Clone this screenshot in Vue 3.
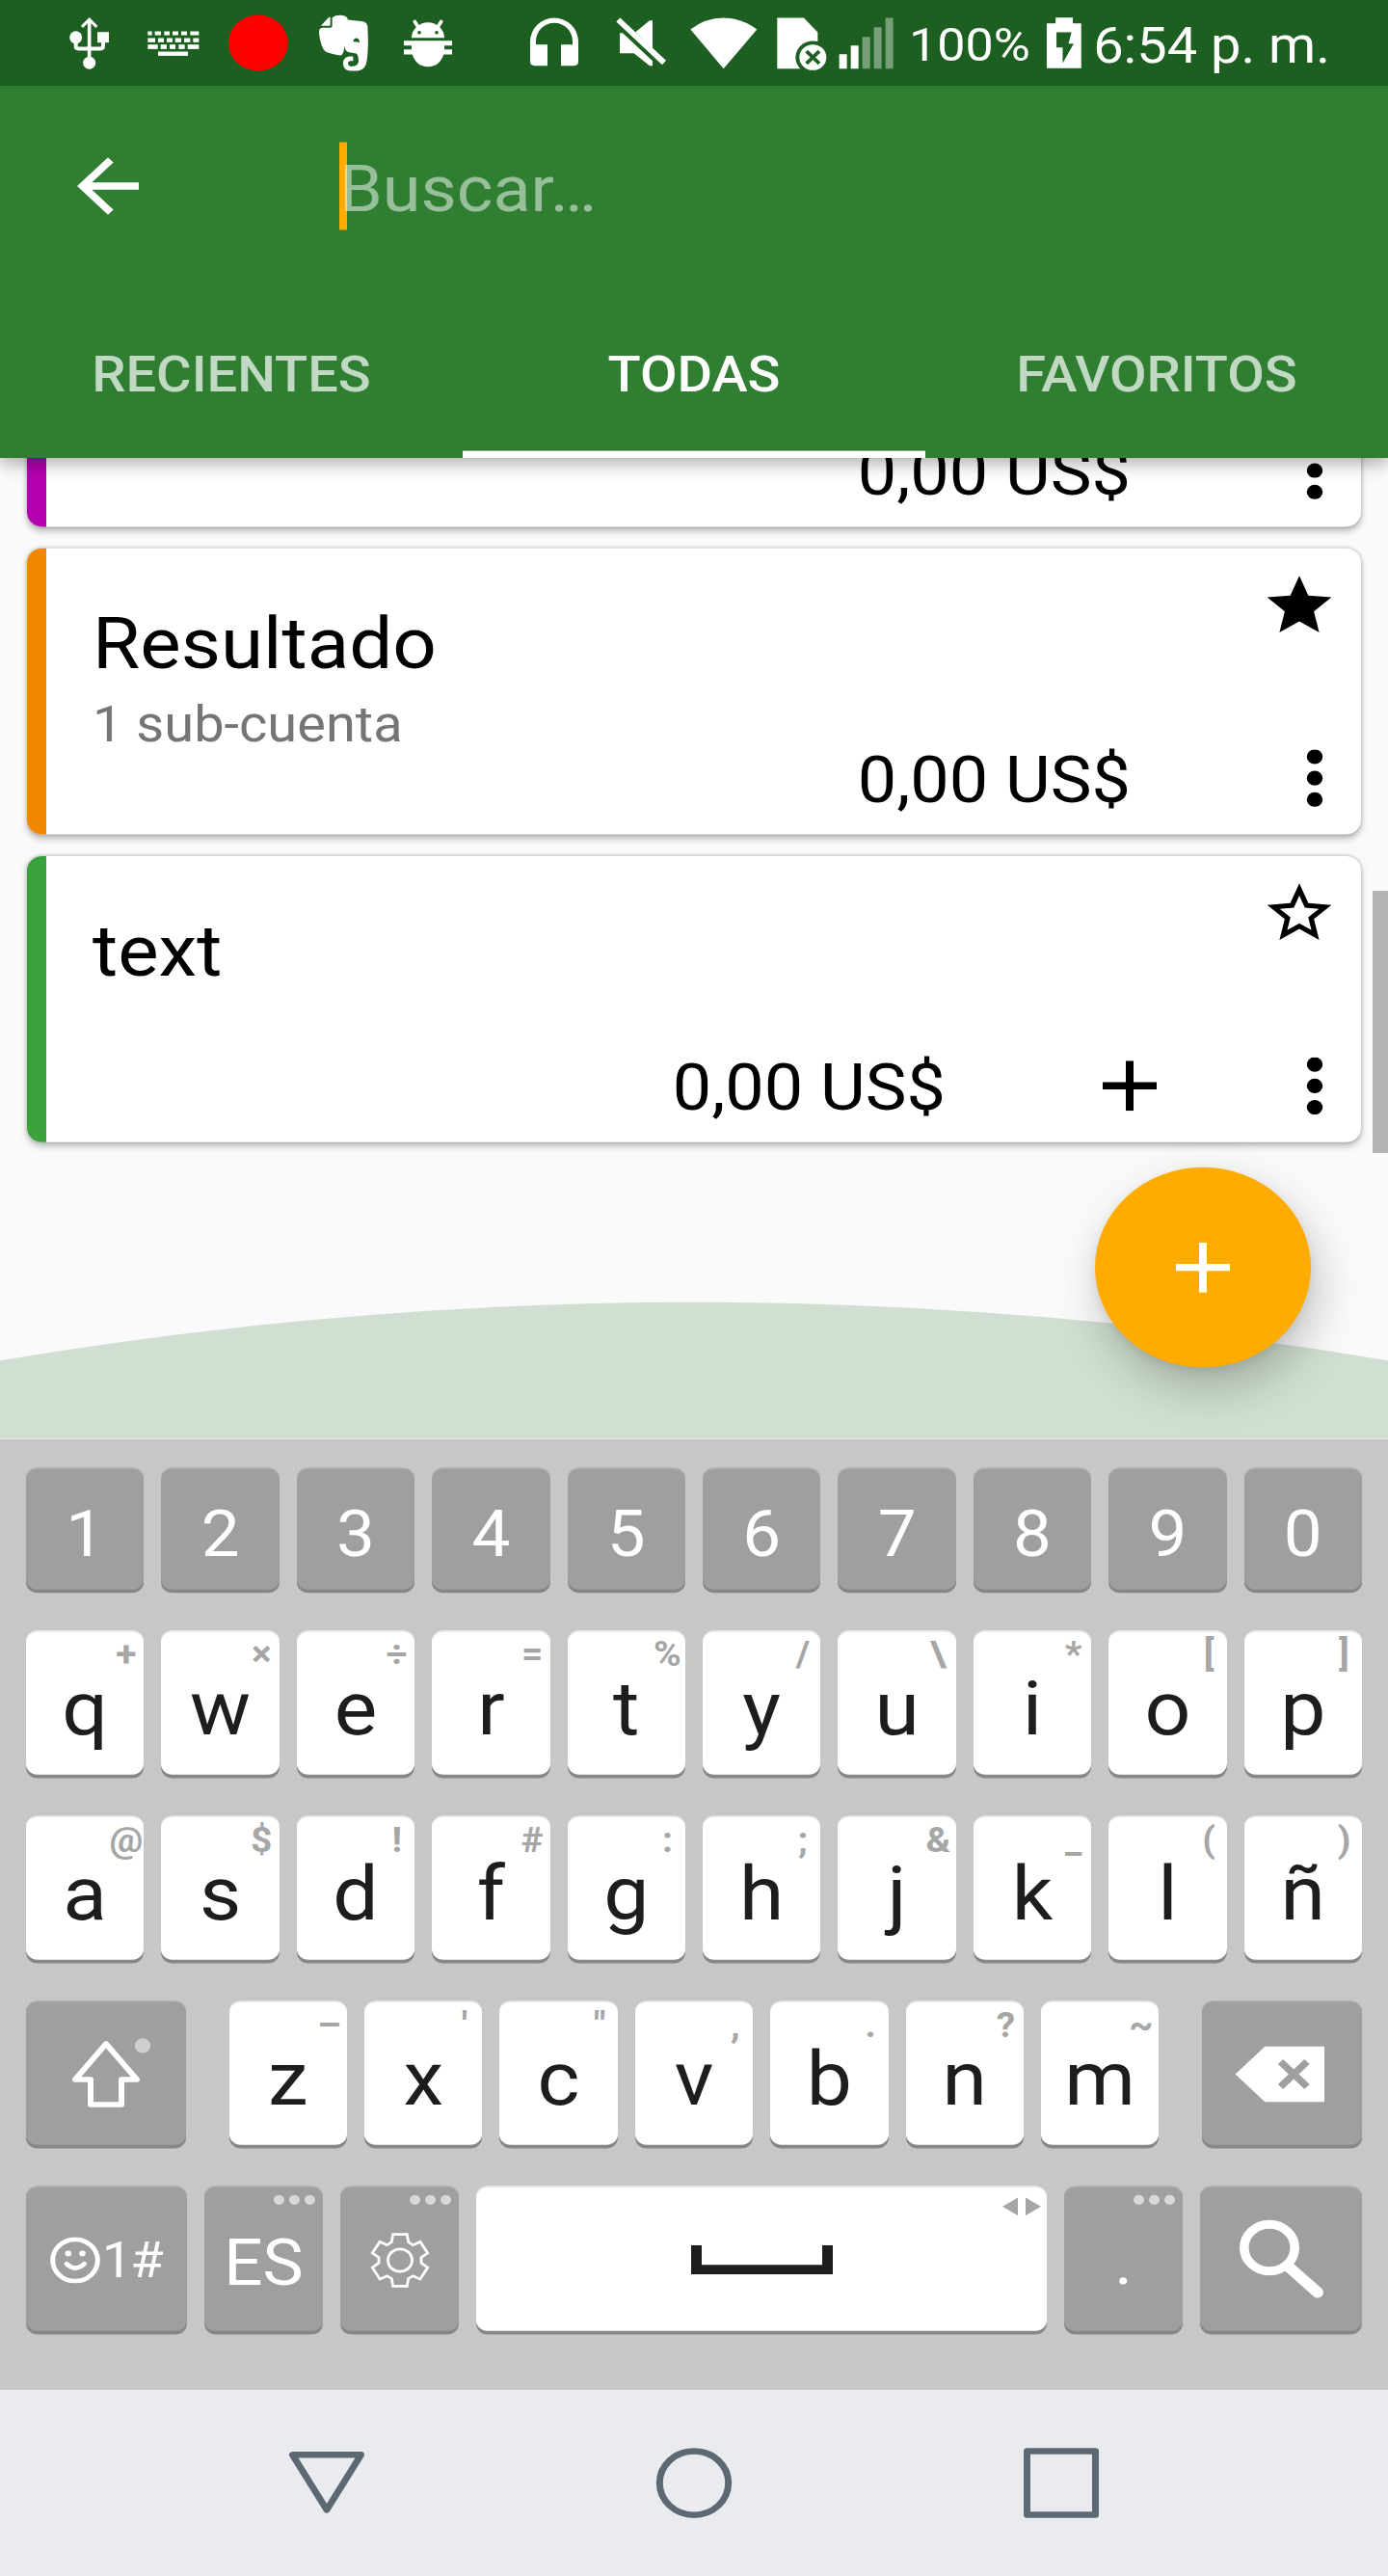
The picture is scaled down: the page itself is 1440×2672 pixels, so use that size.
<script setup>
const tabs = [
  { label: 'Recientes', active: false },
  { label: 'Todas', active: true },
  { label: 'Favoritos', active: false },
]

const accounts = [
  { id: 1, tone: 'purple', name: '', sub: '', amount: '0,00 US$', star: 'none', add: false },
  { id: 2, tone: 'orange', name: 'Resultado', sub: '1 sub-cuenta', amount: '0,00 US$', star: 'full', add: false },
  { id: 3, tone: 'green', name: 'text', sub: '', amount: '0,00 US$', star: 'outline', add: true },
]

const digits = '1234567890'.split('')
const pair = (letters, hints) => letters.split('').map((c, i) => ({ c, hint: hints[i] }))
const letterRows = [pair('qwertyuiop', '+×÷=%/\\*[]'), pair('asdfghjklñ', '@$!#:;&_()')]
const bottomLetters = pair('zxcvbnm', '–\'",.?~')

const keyboardGlyph = [
  [67, 12, [[281, 13], [303, 19], [332, 17], [358, 18], [385, 18], [413, 27]]],
  [88, 13, [[281, 23], [313, 18], [340, 18], [366, 19], [394, 19], [422, 18]]],
  [108, 14, [[281, 31], [321, 19], [349, 18], [377, 19], [405, 35]]],
  [130, 13, [[313, 93]]],
].flatMap(([y, h, cells]) => cells.map(([x, w]) => ({ x, y, w, h })))
</script>

<template>
  <div class="viewport">
    <div class="screen">
      <header class="appbar">
        <div class="status">
          <svg class="si usb" viewBox="0 0 220 225" preserveAspectRatio="none">
            <path d="M98 34V165" class="line" stroke-width="11" />
            <path d="M75 53 98 30 121 53" class="line" stroke-width="9" />
            <path d="M56 95V113Q56 121 64 121H133Q141 121 141 113V95" class="line" stroke-width="12" />
            <circle cx="56" cy="86" r="19.5" /><circle cx="98" cy="165" r="19.5" />
            <rect x="123" y="69" width="36" height="33" />
          </svg>
          <svg class="si kbd" viewBox="220 0 270 225" preserveAspectRatio="none">
            <rect v-for="(k, i) in keyboardGlyph" :key="i" :x="k.x" :y="k.y" :width="k.w" :height="k.h" />
          </svg>
          <svg class="si rec" viewBox="490 0 280 225" preserveAspectRatio="none">
            <ellipse cx="624.5" cy="103" rx="93" ry="87" fill="#f00" />
          </svg>
          <svg class="si note" viewBox="770 0 250 225" preserveAspectRatio="none">
            <path d="M819 48 843 23Q847 21 847 25V48Q846 50 842 50H822Q817 50 819 48Z" />
            <path d="M853 24Q864 16 880 17Q899 18 902 31L948 36Q962 39 963 52Q967 110 961 158Q957 188 934 190H908Q887 189 887 166Q888 146 908 145H918V159H908Q901 161 902 168Q905 177 916 176Q936 175 935 158Q934 140 928 136L905 132Q893 130 891 112Q889 142 878 142Q850 138 832 130Q818 120 812 74Q811 56 822 56H848Q853 55 853 50Z" />
            <path d="M918 99Q920 88 929 88Q938 90 938 102Q928 98 918 99Z" fill="#1b5e20" />
          </svg>
          <svg class="si bug" viewBox="1020 0 270 225" preserveAspectRatio="none">
            <path d="M1101 87A51 48 0 0 1 1203 87Z" />
            <path d="M1111 37 1121 53M1193 37 1183 53" class="line" stroke-width="11" stroke-linecap="round" />
            <circle cx="1125" cy="71" r="5.5" fill="#1b5e20" /><circle cx="1179" cy="71" r="5.5" fill="#1b5e20" />
            <path d="M1077 96H1227V111H1203V123H1227V139H1201Q1188 177 1152 177Q1116 177 1103 139H1077V123H1101V111H1077Z" />
          </svg>
          <svg class="si phones" viewBox="0 0 270 225" preserveAspectRatio="none">
            <path d="M60 160V100A75 75 0 0 1 210 100V160Q210 174 196 174H156V108H192V97A57 56 0 0 0 78 97V108H114V174H74Q60 174 60 160Z" />
          </svg>
          <svg class="si mute" viewBox="270 0 250 225" preserveAspectRatio="none">
            <path d="M328 37 340 25 483 158 471 171Z" />
            <path d="M339 72H348L441 159V174H432L383 135H339Z" />
            <path d="M388 69 432 33H441V121Z" />
          </svg>
          <svg class="si wifi" viewBox="520 0 280 225" preserveAspectRatio="none">
            <path d="M560 61Q607 25 663 25Q720 25 767 61L663 183Z" />
          </svg>
          <svg class="si sim" viewBox="800 0 200 225" preserveAspectRatio="none">
            <path d="M828 25H911L954 70V183H828Z" />
            <ellipse cx="939" cy="148" rx="54" ry="51" fill="#1d5f20" />
            <ellipse cx="939" cy="148" rx="42" ry="40" />
            <path d="M919 129 959 167M959 129 919 167" stroke="#1d5f20" stroke-width="11" fill="none" />
          </svg>
          <svg class="si signal" viewBox="1000 0 230 225" preserveAspectRatio="none">
            <path d="M1023 138h24v45h-24zM1059 111h24v72h-24z" />
            <path d="M1095 84h24v99h-24zM1131 54h24v129h-24zM1167 25h24v158h-24z" opacity=".4" />
          </svg>
          <span class="percent">100%</span>
          <svg class="si battery" viewBox="784 30 105 225" preserveAspectRatio="none">
            <path fill-rule="evenodd" d="M817 54h39v18h19v140h-78v-140h20zM819 100V147H833V196L858 135H846L853 100Z" />
          </svg>
          <span class="clock">6:54 p. m.</span>
        </div>

        <div class="toolbar">
          <svg class="back" viewBox="0 0 24 24"><path fill="#fff" d="M20 11H7.83l5.59-5.59L12 4l-8 8 8 8 1.41-1.41L7.83 13H20v-2z" /></svg>
          <div class="search"><i class="caret"></i><span class="placeholder">Buscar…</span></div>
        </div>

        <nav class="tabs">
          <div v-for="t in tabs" :key="t.label" class="tab" :class="{ active: t.active }">{{ t.label }}</div>
        </nav>
      </header>

      <main class="content">
        <svg class="hill" viewBox="0 0 1440 154" preserveAspectRatio="none"><path fill="#d0dfd1" d="M0 66Q720 -64 1440 66V154H0Z" /></svg>
        <div class="list">
          <article v-for="a in accounts" :key="a.id" class="card">
            <i class="strip" :class="a.tone"></i>
            <div class="body">
              <div class="name">{{ a.name }}</div>
              <div class="sub">{{ a.sub }}</div>
              <div class="row">
                <span class="amount" :class="{ near: a.add }">{{ a.amount }}</span>
                <svg v-if="a.add" class="add" viewBox="0 0 56 56"><path d="M24 0h8v24h24v8H32v24h-8V32H0v-8h24z" /></svg>
                <svg class="more" viewBox="0 0 24 64"><circle cx="12" cy="8" r="8.2" /><circle cx="12" cy="32" r="8.2" /><circle cx="12" cy="56" r="8.2" /></svg>
              </div>
            </div>
            <svg v-if="a.star === 'full'" class="star" viewBox="0 0 24 24"><path d="M12 17.27L18.18 21l-1.64-7.03L22 9.24l-7.19-.61L12 2 9.19 8.63 2 9.24l5.46 4.73L5.82 21z" /></svg>
            <svg v-if="a.star === 'outline'" class="star" viewBox="0 0 24 24"><path d="M22 9.24l-7.19-.62L12 2 9.19 8.63 2 9.24l5.46 4.73L5.82 21 12 17.27 18.18 21l-1.63-7.03L22 9.24zM12 15.4l-3.76 2.27 1-4.28-3.32-2.88 4.38-.38L12 6.1l1.71 4.04 4.38.38-3.32 2.88 1 4.28L12 15.4z" /></svg>
          </article>
        </div>
        <i class="scroll"></i>
        <div class="fab"><svg viewBox="0 0 56 56"><path fill="#fff" d="M24 0h8v24h24v8H32v24h-8V32H0v-8h24z" /></svg></div>
      </main>

      <section class="keyboard">
        <div class="keys digits">
          <div v-for="d in digits" :key="d" class="key dark digit">{{ d }}</div>
        </div>
        <div v-for="(row, r) in letterRows" :key="r" class="keys">
          <div v-for="k in row" :key="k.c" class="key letter">{{ k.c }}<span class="hint">{{ k.hint }}</span></div>
        </div>
        <div class="keys third">
          <div class="key dark shift">
            <svg viewBox="0 0 166 164">
              <path d="M83 48 51 88H67V116H99V88H115Z" fill="none" stroke="#fff" stroke-width="6" stroke-linejoin="round" />
              <circle cx="121" cy="50" r="8.2" fill="#cecece" />
            </svg>
          </div>
          <div class="letters">
            <div v-for="k in bottomLetters" :key="k.c" class="key letter">{{ k.c }}<span class="hint">{{ k.hint }}</span></div>
          </div>
          <div class="key dark bksp">
            <svg viewBox="0 0 166 164">
              <path fill="#fff" d="M34.6 82 65.3 51H127V113H65.3Z" />
              <path d="M81.5 68 109 96M109 68 81.5 96" stroke="#9f9f9f" stroke-width="7.5" />
            </svg>
          </div>
        </div>
        <div class="keys fourth">
          <div class="key dark sym">
            <svg class="smile" viewBox="0 0 52 52">
              <circle cx="26" cy="26" r="23.3" class="line" stroke-width="5" />
              <circle cx="18.8" cy="18.5" r="3.3" fill="#fff" /><circle cx="33.5" cy="18.5" r="3.3" fill="#fff" />
              <path d="M17 30Q26 39.5 35.5 30" class="line" stroke-width="5" stroke-linecap="round" />
            </svg>
            <span>1#</span>
          </div>
          <div class="key dark lang">ES<span class="dots"><i></i><i></i><i></i></span></div>
          <div class="key dark">
            <svg class="gear" viewBox="-32 -32 64 64">
              <path d="M-7.3 -29H7.3L8.7 -20.5 13.5 -17 20.9 -20.7 28.7 -8.1 22 -3V3L28.7 8.1 20.9 21.2 13.5 17.5 8.7 20.5 7.3 29H-7.3L-8.7 20.5 -13.5 17.5 -20.9 21.2 -28.7 8.1 -22 3V-3L-28.7 -8.1 -20.9 -20.7 -13.5 -17 -8.7 -20.5Z" class="line" stroke-width="2.8" />
              <circle r="12.5" class="line" stroke-width="3" />
            </svg>
            <span class="dots"><i></i><i></i><i></i></span>
          </div>
          <div class="key space">
            <svg class="bar" viewBox="0 0 147 33"><path d="M5.5 0V27.5H141.5V0" fill="none" stroke="#1d1d1d" stroke-width="11" /></svg>
            <svg class="arrows" viewBox="0 0 40 20"><path fill="#a6a6a6" d="M0 10 16 0V20ZM40 10 24 0V20Z" /></svg>
          </div>
          <div class="key dark dot">.<span class="dots"><i></i><i></i><i></i></span></div>
          <div class="key dark">
            <svg class="lens" viewBox="0 0 168 164">
              <circle cx="72" cy="69" r="26.2" class="line" stroke-width="9.6" />
              <path d="M90.5 89 122 119" class="line" stroke-width="12" stroke-linecap="round" />
            </svg>
          </div>
        </div>
      </section>

      <footer class="nav">
        <svg viewBox="0 0 80 80"><path d="M4.5 8.5H75.5L40 70Z" fill="none" stroke="#5c6972" stroke-width="7" stroke-linejoin="round" /></svg>
        <svg viewBox="0 0 80 80"><circle cx="40" cy="40" r="35.7" fill="none" stroke="#5c6972" stroke-width="7" /></svg>
        <svg viewBox="0 0 80 80"><rect x="4.5" y="4.5" width="71" height="71" fill="none" stroke="#5c6972" stroke-width="7" stroke-linejoin="round" /></svg>
      </footer>
    </div>
  </div>
</template>

<style>
body { margin: 0; }
</style>

<style scoped>
.viewport { width: 1440px; height: 2672px; overflow: hidden; }
.screen {
  width: 1440px; height: 2880px; transform: scaleY(0.927778); transform-origin: 0 0;
  display: flex; flex-direction: column; background: #fafafa;
  font-family: Roboto, sans-serif; color: #000;
}
svg { display: block; flex: none; }
.line { fill: none; stroke: #fff; }

.appbar { position: relative; z-index: 2; height: 512px; flex: none; background: #2f7e32; color: #fff; box-shadow: 0 8px 18px rgba(0, 0, 0, .32); }
.status { height: 96px; box-sizing: border-box; padding: 10.78px 0 0 60px; background: #1d5f20; display: flex; align-items: flex-start; white-space: nowrap; }
.si { height: 80.84px; fill: #fff; }
.usb { width: 73.33px; }
.kbd { width: 90px; }
.rec { width: 93.33px; }
.note { width: 83.33px; }
.bug { width: 90px; margin-right: 40px; }
.phones { width: 90px; }
.mute { width: 83.33px; }
.wifi { width: 93.33px; }
.sim { width: 66.67px; }
.signal { width: 76.67px; }
.percent { width: 137px; padding-left: 3px; font-size: 52px; line-height: 80px; }
.battery { width: 48.2px; }
.clock { padding-left: 6px; font-size: 56px; line-height: 81px; }

.toolbar { height: 224px; display: flex; align-items: center; padding-left: 64px; }
.back { width: 96px; height: 96px; }
.search { position: relative; margin-left: 192px; height: 98px; display: flex; align-items: center; }
.caret { width: 8px; height: 98px; background: #ffab00; margin-right: -8px; flex: none; }
.placeholder { position: relative; padding-top: 8px; font-size: 72px; line-height: 98px; color: rgba(255, 255, 255, .5); }

.tabs { display: grid; grid-template-columns: repeat(3, 1fr); height: 192px; }
.tab { text-align: center; text-transform: uppercase; font-size: 56px; font-weight: 500; line-height: 199px; height: 184px; color: rgba(255, 255, 255, .7); border-bottom: 8px solid transparent; }
.tab.active { color: #fff; border-color: #fff; }

.content { position: relative; height: 1096.6px; flex: none; overflow: hidden; }
.hill { position: absolute; left: 0; bottom: 0; width: 1440px; height: 154px; }
.list { position: relative; margin-top: -243px; padding: 0 28px; display: flex; flex-direction: column; gap: 24px; }
.card { position: relative; display: flex; height: 320px; border-radius: 16px; background: #fff; box-shadow: 0 4px 8px rgba(0, 0, 0, .25), 0 0 4px rgba(0, 0, 0, .18); }
.strip { width: 20px; border-radius: 16px 0 0 16px; }
.purple { background: #b300b0; }
.orange { background: #ef8800; }
.green { background: #3ba23b; }
.body { flex: 1; padding: 58.6px 36px 0 48px; }
.name { height: 96px; font-size: 80px; line-height: 96px; }
.sub { margin-top: 10px; height: 64px; font-size: 56px; line-height: 64px; color: #757575; }
.row { display: flex; justify-content: flex-end; align-items: flex-start; }
.amount { font-size: 72px; line-height: 62.6px; margin-right: 179px; }
.amount.near { margin-right: 163px; }
.add { width: 56px; height: 56px; margin-right: 152px; }
.more { width: 24px; height: 64px; margin-top: -4px; }
.star { position: absolute; right: 24px; top: 24px; width: 80px; height: 80px; }
.scroll { position: absolute; right: 0; top: 484px; width: 16px; height: 293px; background: #b3b3b3; }
.fab { position: absolute; left: 1136px; top: 792.6px; width: 224px; height: 224px; border-radius: 50%; background: #ffab00; display: flex; align-items: center; justify-content: center; box-shadow: 6px 22px 50px rgba(0, 0, 0, .23), 0 4px 10px rgba(0, 0, 0, .08); }
.fab svg { width: 56px; height: 56px; }

.keyboard { box-sizing: border-box; height: 1063.4px; flex: none; padding: 32.4px 27px 0; background: #c7c7c7; display: flex; flex-direction: column; gap: 46px; }
.keys { display: grid; grid-template-columns: repeat(10, 1fr); grid-template-rows: 100%; gap: 18px; height: 161px; flex: none; }
.keys.digits { height: 136px; }
.keys.third { display: flex; justify-content: space-between; gap: 0; }
.letters { display: grid; grid-template-columns: repeat(7, 122.4px); grid-template-rows: 100%; gap: 18px; height: 161px; }
.keys.fourth { display: grid; grid-template-columns: 167px 123px 123px 592px 123px 168px; height: 162px; }
.key { position: relative; display: flex; justify-content: center; align-items: flex-start; border-radius: 12px; background: #fff; color: #1d1d1d; box-shadow: 0 4px 0 #868886, inset 0 1.5px 0 #e4e4e4; }
.dark { background: #9f9f9f; color: #fff; box-shadow: 0 4px 0 #868886, inset 0 1.5px 0 #acacac; }
.digit { font-size: 71px; line-height: 149px; }
.letter { font-size: 84px; line-height: 175px; }
.hint { position: absolute; right: -6px; top: 0; width: 49px; text-align: center; font-size: 39px; font-weight: 700; line-height: 54.6px; color: #a6a6a6; }
.shift, .bksp { width: 166px; }
.shift svg, .bksp svg { width: 166px; height: 164px; }
.smile { width: 52px; height: 52px; margin-top: 57px; }
.sym { font-size: 56px; line-height: 166.6px; justify-content: flex-start; padding-left: 24.7px; box-sizing: border-box; white-space: nowrap; letter-spacing: -2px; }
.sym span { margin-left: 2px; }
.lang { font-size: 71px; line-height: 174.6px; }
.dots { position: absolute; top: 10.5px; right: 8px; display: flex; gap: 5px; }
.dots i { width: 11px; height: 11px; border-radius: 50%; background: #d8d8d8; }
.gear { width: 64px; height: 64px; margin-top: 51.5px; }
.bar { width: 147px; height: 33px; margin-top: 66px; }
.arrows { position: absolute; right: 6px; top: 13px; width: 40px; height: 20px; }
.dot { font-size: 71px; line-height: 169px; }
.lens { width: 168px; height: 164px; }

.nav { height: 208px; flex: none; background: #e9ebef; display: flex; justify-content: center; align-items: center; gap: 301px; }
.nav svg { width: 80px; height: 80px; }
</style>
